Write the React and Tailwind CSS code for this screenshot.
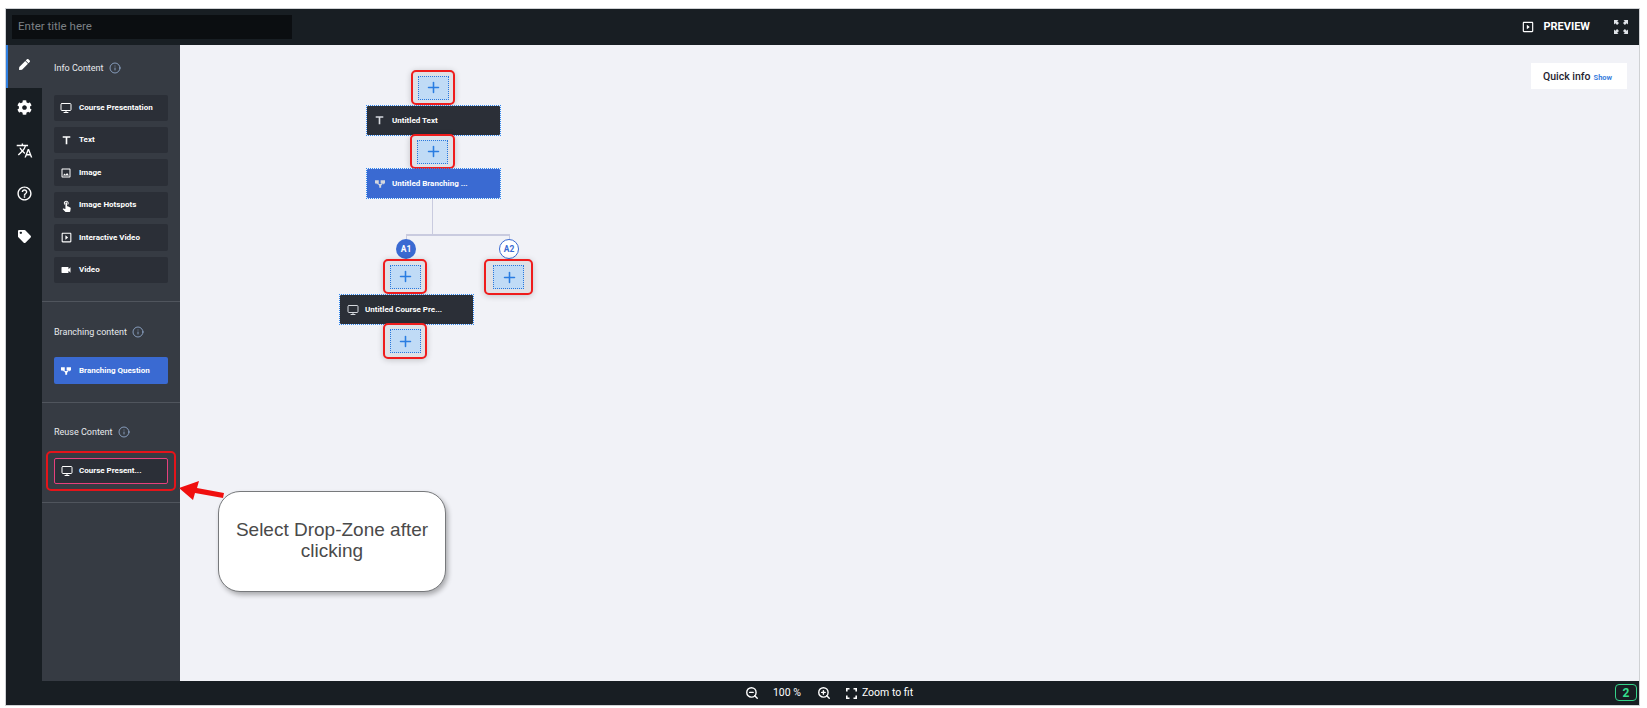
import { Monitor, Plus, ZoomIn, ZoomOut, Info } from "lucide-react";
import { FaCog, FaPen, FaTag } from "react-icons/fa";
import { MdTranslate, MdTouchApp, MdVideocam, MdOutlineImage, MdOutlineSlideshow, MdOutlineHelpOutline, MdTitle } from "react-icons/md";

function BranchIcon({ size = 13, className = "" }) {
  return (
    <svg width={size} height={size} viewBox="0 0 16 16" fill="currentColor" className={className}>
      <path d="M0 2h6v5H4.4v1.5H2.8V7H0z" />
      <path d="M9 2h7v5h-2v1.5h-1.6V7H9z" />
      <path d="M6.2 8h3.4L11 6.4l1.2 1.2-2.4 3V14H6.8v-3.4L4.4 7.6l1.2-1.2z" />
    </svg>
  );
}

function CornersIcon() {
  return (
    <svg width="14" height="14" viewBox="0 0 14 14" fill="currentColor">
      <path d="M0 0h4.5L3.2 1.3 5 3.1 3.1 5 1.3 3.2 0 4.5z" />
      <path d="M14 0H9.5l1.3 1.3L9 3.1 10.9 5l1.8-1.8L14 4.5z" />
      <path d="M0 14h4.5l-1.3-1.3L5 10.9 3.1 9l-1.8 1.8L0 9.5z" />
      <path d="M14 14H9.5l1.3-1.3L9 10.9 10.9 9l1.8 1.8L14 9.5z" />
    </svg>
  );
}

function FitIcon() {
  return (
    <svg width="11" height="11" viewBox="0 0 11 11" fill="none" stroke="currentColor" strokeWidth="1.6">
      <path d="M0.8 3.5V0.8H3.5M7.5 0.8h2.7v2.7M10.2 7.5v2.7H7.5M3.5 10.2H0.8V7.5" />
    </svg>
  );
}

function SideTab({ icon, active }) {
  return (
    <div className={`h-[43px] flex items-center justify-center pb-[4px] text-white ${active ? "bg-[#363b43] border-l-2 border-[#2f7fe0] pr-[2px]" : ""}`}>
      {icon}
    </div>
  );
}

function Item({ icon, label, blue, picked, h = "h-[26px]" }) {
  return (
    <div className={`w-[114px] ${h} rounded-[2px] flex items-center text-white ${blue ? "bg-[#3a6ad2]" : "bg-[#2b2f37]"} ${picked ? "border border-[#e6407c]" : ""}`}>
      <span className={`${picked ? "w-[24px]" : "w-[25px]"} flex justify-center shrink-0 pr-[1px]`}>{icon}</span>
      <span className="text-[8px] font-bold leading-none whitespace-nowrap">{label}</span>
    </div>
  );
}

function Heading({ children }) {
  return (
    <div className="flex items-center gap-[5px] text-[9px] text-[#e8eaee] leading-none">
      {children}
      <Info size={12} strokeWidth={1.4} className="text-[#a8c4ee]" />
    </div>
  );
}

function Drop({ className }) {
  return (
    <div className={`absolute flex items-center justify-center rounded-[5px] border-2 border-[#ef1c1c] bg-[#dfe1e6] shadow-[0_1px_6px_rgba(0,0,0,0.2)] ${className}`}>
      <div className="w-[31px] h-[24px] flex items-center justify-center border border-dotted border-[#2a78dc] bg-[#c0dbf6] text-[#2a7de1] pl-[1px]">
        <Plus size={17} strokeWidth={2.2} />
      </div>
    </div>
  );
}

function Node({ icon, label, blue, className }) {
  return (
    <div className={`absolute w-[135px] h-[31px] border border-dotted border-[#2f86ee] ${className}`}>
      <div className={`w-full h-full flex items-center rounded-[1px] text-white ${blue ? "bg-[#3a6ad2]" : "bg-[#2b2f37]"}`}>
        <span className="w-[25px] flex justify-center shrink-0 text-[#d5d8de]">{icon}</span>
        <span className="text-[8px] font-bold leading-none whitespace-nowrap">{label}</span>
      </div>
    </div>
  );
}

export default function App() {
  return (
    <div className="relative w-[1647px] h-[708px] bg-white overflow-hidden font-['Roboto',sans-serif]">
      <div className="absolute left-[5px] top-[8px] w-[1635px] h-[698px] border border-[#cfd1d4] flex flex-col">
        {/* top bar */}
        <div className="h-[36px] shrink-0 bg-[#181e23] flex items-center pl-[6px] pr-[11px] text-white">
          <div className="w-[280px] h-[24px] bg-[#0b0e11] flex items-center px-[6px] text-[11.5px] text-[#7c8085]">Enter title here</div>
          <div className="ml-auto flex items-center">
            <MdOutlineSlideshow size={14} />
            <span className="ml-[8px] text-[11px] font-bold">PREVIEW</span>
            <span className="ml-[24px] text-[#dfe3e8]"><CornersIcon /></span>
          </div>
        </div>

        <div className="flex flex-1 min-h-0">
          {/* icon rail */}
          <div className="w-[36px] shrink-0 bg-[#181e23] flex flex-col">
            <SideTab active icon={<FaPen size={11} />} />
            <SideTab icon={<FaCog size={15} />} />
            <SideTab icon={<MdTranslate size={17} />} />
            <SideTab icon={<MdOutlineHelpOutline size={17} />} />
            <SideTab icon={<FaTag size={13} />} />
          </div>

          {/* content panel */}
          <div className="w-[138px] shrink-0 bg-[#363b43]">
            <div className="h-[257px] border-b border-[#50555d] pl-[12px] pt-[17px]">
              <Heading>Info Content</Heading>
              <div className="flex flex-col gap-[6px] mt-[21px]">
                <Item icon={<Monitor size={12} />} label="Course Presentation" />
                <Item icon={<MdTitle size={13} />} label="Text" />
                <Item h="h-[27px]" icon={<MdOutlineImage size={12} />} label="Image" />
                <Item icon={<MdTouchApp size={13} />} label="Image Hotspots" />
                <Item h="h-[27px]" icon={<MdOutlineSlideshow size={13} />} label="Interactive Video" />
                <Item icon={<MdVideocam size={12} />} label="Video" />
              </div>
            </div>
            <div className="h-[101px] border-b border-[#50555d] pl-[12px] pt-[24px]">
              <Heading>Branching content</Heading>
              <div className="mt-[19px]">
                <Item blue h="h-[27px]" icon={<BranchIcon size={10} />} label="Branching Question" />
              </div>
            </div>
            <div className="h-[100px] border-b border-[#50555d] pl-[12px] pt-[23px]">
              <Heading>Reuse Content</Heading>
              <div className="mt-[20px]">
                <Item picked icon={<Monitor size={12} />} label="Course Present..." />
              </div>
            </div>
          </div>

          {/* canvas */}
          <div className="relative flex-1 bg-[#f1f2f7]">
            <div className="absolute left-[252px] top-[154px] w-[1px] h-[36px] bg-[#c9cbdf]" />
            <div className="absolute left-[226px] top-[189px] w-[104px] h-[2px] bg-[#c9cbdf]" />
            <div className="absolute left-[226px] top-[189px] w-[1px] h-[16px] bg-[#c9cbdf]" />
            <div className="absolute left-[329px] top-[189px] w-[1px] h-[16px] bg-[#c9cbdf]" />
            <div className="absolute left-[226px] top-[213px] w-[1px] h-[90px] bg-[#c9cbdf]" />

            <Drop className="left-[231px] top-[25px] w-[44px] h-[35px]" />
            <Node className="left-[186px] top-[60px]" icon={<MdTitle size={13} />} label="Untitled Text" />
            <Drop className="left-[230px] top-[89px] w-[45px] h-[35px]" />
            <Node blue className="left-[186px] top-[123px]" icon={<BranchIcon size={10} />} label="Untitled Branching ..." />

            <div className="absolute left-[216px] top-[194px] w-[20px] h-[20px] rounded-full bg-[#3a6ad2] text-white text-[8.5px] font-bold flex items-center justify-center">A1</div>
            <div className="absolute left-[319px] top-[194px] w-[20px] h-[20px] rounded-full bg-white border border-[#3a6ad2] text-[#3a6ad2] text-[8.5px] font-bold flex items-center justify-center">A2</div>

            <Drop className="left-[203px] top-[214px] w-[44px] h-[35px]" />
            <Drop className="left-[304px] top-[214px] w-[49px] h-[36px]" />
            <Node className="left-[159px] top-[249px]" icon={<Monitor size={12} />} label="Untitled Course Pre..." />
            <Drop className="left-[203px] top-[278px] w-[44px] h-[36px]" />

            {/* quick info */}
            <div className="absolute right-[12px] top-[18px] w-[96px] h-[26px] bg-white flex items-center pl-[12px] gap-[3px]">
              <span className="text-[10.5px] font-medium text-[#1f2430] mt-[1px]">Quick info</span>
              <span className="text-[7.5px] font-bold text-[#3c7fde] mt-[4px]">Show</span>
            </div>

            {/* callout */}
            <div className="absolute left-[38px] top-[446px] w-[228px] h-[101px] px-[6px] pb-[4px] flex items-center justify-center text-center bg-white border border-[#77797c] rounded-[22px] shadow-[2px_3px_5px_rgba(0,0,0,0.3)] font-['Liberation_Sans',sans-serif] text-[19px] leading-[21px] text-[#4a4a4a]">
              Select Drop-Zone after clicking
            </div>
          </div>
        </div>

        {/* bottom bar */}
        <div className="h-[24px] shrink-0 bg-[#181e23] relative flex items-center justify-center text-white text-[10.5px]">
          <div className="flex items-center ml-[13px]">
            <ZoomOut size={14} strokeWidth={2.4} />
            <span className="ml-[14px]">100 %</span>
            <span className="ml-[16px]"><ZoomIn size={14} strokeWidth={2.4} /></span>
            <span className="ml-[15px]"><FitIcon /></span>
            <span className="ml-[5px]">Zoom to fit</span>
          </div>
          <div className="absolute right-[2px] top-[3px] w-[22px] h-[17px] rounded-[4px] border border-[#35d38a] text-[#35e08f] text-[12px] font-bold flex items-center justify-center">2</div>
        </div>
      </div>

      {/* annotation over the panel */}
      <div className="absolute left-[46px] top-[451px] w-[130px] h-[40px] rounded-[5px] border-2 border-[#e4141a]" />
      <svg className="absolute left-[176px] top-[480px]" width="50" height="24" viewBox="0 0 50 24">
        <path d="M3 8 L23 1 L21 8 L48 13 L47 18 L19 13 L17 20 Z" fill="#f00f0f" />
      </svg>
    </div>
  );
}
